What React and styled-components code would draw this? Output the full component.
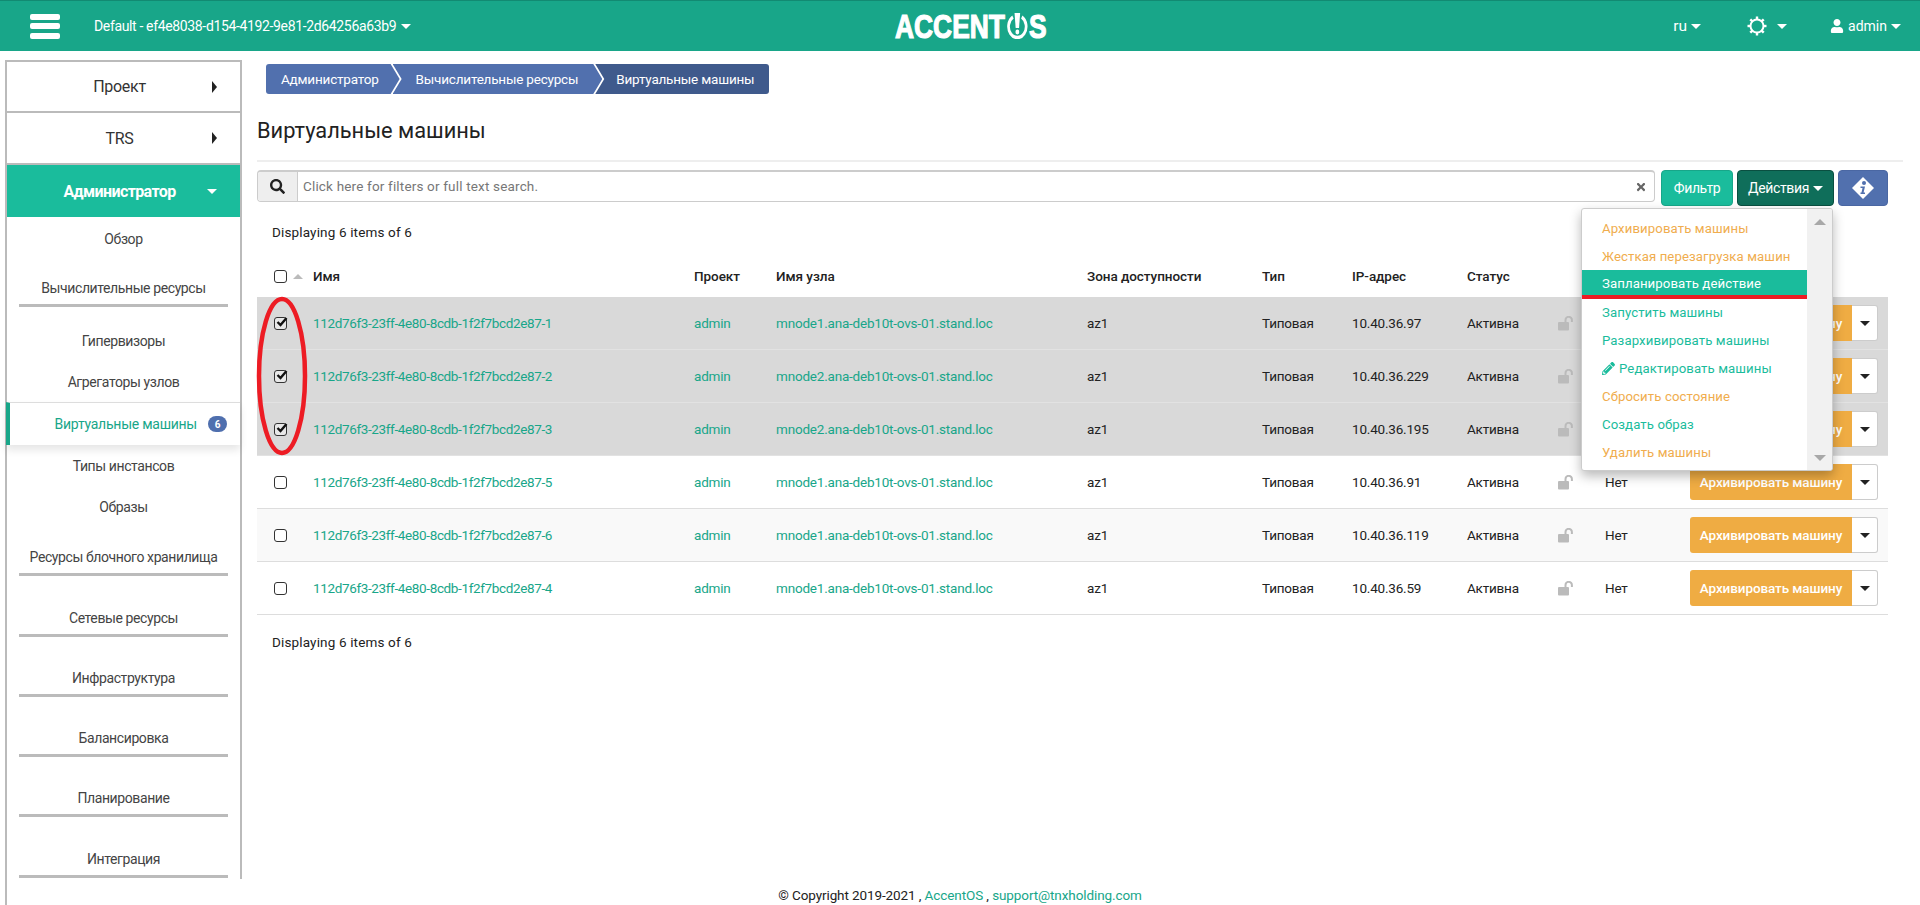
import React from "react";
import styled, { createGlobalStyle } from "styled-components";
import { FaSearch, FaTimes, FaPencilAlt, FaUser } from "react-icons/fa";

const FONT = `Roboto, "Liberation Sans", sans-serif`;

const Global = createGlobalStyle`
  html, body { margin: 0; padding: 0; height: 100%; background: #fff; }
  body { font-family: ${FONT}; font-size: 13px; color: #222; overflow: hidden; }
  * { box-sizing: border-box; }
`;

const Page = styled.div`
  width: 1920px;
  height: 905px;
  display: flex;
  flex-direction: column;
`;

const Header = styled.header`
  height: 51px;
  flex: none;
  background: #18a689;
  border-top: 1px solid #128a72;
  color: #fff;
  display: grid;
  grid-template-columns: 1fr auto 1fr;
  align-items: center;
`;

const HeaderLeft = styled.div`
  display: flex;
  align-items: center;
  padding-left: 30px;
`;

const Burger = styled.div`
  width: 30px;
  height: 25px;
  display: flex;
  flex-direction: column;
  justify-content: space-between;
  margin-right: 34px;
  span {
    height: 6px;
    border-radius: 2px;
    background: #fff;
  }
`;

const Project = styled.div`
  font-size: 14px;
  letter-spacing: -0.35px;
  display: flex;
  align-items: center;
  gap: 5px;
`;

const Caret = styled.i`
  display: inline-block;
  width: 0;
  height: 0;
  border-left: ${(p) => p.$size || 5}px solid transparent;
  border-right: ${(p) => p.$size || 5}px solid transparent;
  border-top: ${(p) => p.$size || 5}px solid ${(p) => p.$color || "currentColor"};
`;

const Logo = styled.div`
  display: flex;
  align-items: center;
  font-family: "Liberation Sans", sans-serif;
  font-weight: 700;
  font-size: 33px;
  line-height: 1;
  -webkit-text-stroke: 1.2px #fff;
  margin-left: 22px;
  transform: scaleX(0.8);
  svg { margin: 0 1px; }
`;

const HeaderRight = styled.div`
  display: flex;
  align-items: center;
  justify-content: flex-end;
  font-size: 14px;
`;

const TopMenu = styled.div`
  display: flex;
  align-items: center;
  gap: ${(p) => p.$gap || 4}px;
  margin-right: ${(p) => p.$mr || 0}px;
  font-size: ${(p) => p.$fs || 14}px;
`;

const Body = styled.div`
  flex: 1;
  display: flex;
  min-height: 0;
`;

const Sidebar = styled.aside`
  width: 237px;
  margin: 9px 0 0 5px;
  flex: none;
  border-left: 2px solid #bbb;
`;

const SideInner = styled.nav`
  height: 819px;
  border-top: 2px solid #bbb;
  border-right: 2px solid #bbb;
`;

const TopItem = styled.div`
  height: ${(p) => p.$h}px;
  display: grid;
  grid-template-columns: 1fr 48px;
  align-items: center;
  font-size: 16px;
  font-weight: ${(p) => (p.$active ? 700 : 400)};
  color: ${(p) => (p.$active ? "#fff" : "#333")};
  background: ${(p) => (p.$active ? "#1abc9c" : "#fff")};
  border-bottom: ${(p) => (p.$active ? "0" : "2px solid #bbb")};
  letter-spacing: ${(p) => (p.$active ? "-0.6px" : "-0.3px")};
  span { text-align: center; padding-left: 40px; }
`;

const ArrowRight = styled.i`
  width: 0;
  height: 0;
  margin-left: 20px;
  border-top: 6px solid transparent;
  border-bottom: 6px solid transparent;
  border-left: 5px solid #222;
`;

const Sub = styled.div`
  height: ${(p) => p.$h}px;
  display: flex;
  align-items: center;
  justify-content: center;
  font-size: 14px;
  color: #444;
  letter-spacing: -0.4px;
`;

const ActiveSub = styled.div`
  height: 43px;
  margin-left: -1px;
  display: flex;
  align-items: center;
  justify-content: flex-end;
  gap: 11px;
  padding-right: 13px;
  font-size: 14px;
  letter-spacing: -0.25px;
  color: #18a689;
  border-top: 1px solid #ddd;
  border-left: 4px solid #18a689;
  box-shadow: 0 5px 8px rgba(0, 0, 0, 0.1);
  position: relative;
`;

const Badge = styled.b`
  width: 19px;
  height: 16px;
  border-radius: 8px;
  background: #4f6fae;
  color: #fff;
  font-size: 10px;
  font-weight: 700;
  display: flex;
  align-items: center;
  justify-content: center;
`;

const Section = styled.div`
  height: ${(p) => p.$h}px;
  margin: 0 12px;
  display: flex;
  flex-direction: column;
  justify-content: flex-end;
  text-align: center;
  font-size: 14px;
  line-height: 20px;
  color: #444;
  letter-spacing: -0.4px;
  border-bottom: 3px solid #bbb;
  padding-bottom: 6px;
`;

const SubGroup = styled.div`
  padding-top: 14px;
`;

const Main = styled.main`
  flex: 1;
  display: flex;
  flex-direction: column;
  min-width: 0;
`;

const Content = styled.div`
  flex: 1;
  padding: 13px 17px 0 15px;
`;

const Crumbs = styled.div`
  display: flex;
  padding-left: 9px;
  height: 30px;
`;

const Crumb = styled.div`
  height: 30px;
  display: flex;
  align-items: center;
  color: #fff;
  font-size: 13.5px;
  letter-spacing: -0.2px;
  background: ${(p) => (p.$last ? "#3f5a8c" : "#5170ae")};
  padding: ${(p) => p.$pad};
  margin-left: ${(p) => p.$ml || 0}px;
  clip-path: ${(p) =>
    p.$first
      ? "polygon(0 0, calc(100% - 9px) 0, 100% 50%, calc(100% - 9px) 100%, 0 100%)"
      : p.$last
      ? "polygon(0 0, 100% 0, 100% 100%, 0 100%, 9px 50%)"
      : "polygon(0 0, calc(100% - 9px) 0, 100% 50%, calc(100% - 9px) 100%, 0 100%, 9px 50%)"};
  border-radius: ${(p) => (p.$first ? "3px 0 0 3px" : p.$last ? "0 3px 3px 0" : "0")};
`;

const Title = styled.h1`
  margin: 19px 0 11px 0;
  height: 36px;
  font-size: 21.8px;
  line-height: 36px;
  font-weight: 400;
  color: #222;
`;

const Rule = styled.div`
  height: 2px;
  background: #eee;
  margin-bottom: 8px;
`;

const Toolbar = styled.div`
  width: 1631px;
  display: flex;
  align-items: flex-start;
  position: relative;
`;

const Search = styled.div`
  width: 1398px;
  height: 32px;
  display: flex;
  align-items: center;
  border: 1px solid #ccc;
  border-top: 2px solid #ccc;
  border-radius: 4px;
  margin-right: 6px;
  overflow: hidden;
`;

const SearchAddon = styled.div`
  width: 40px;
  height: 100%;
  flex: none;
  background: #eee;
  border-right: 1px solid #ccc;
  display: flex;
  align-items: center;
  justify-content: center;
  color: #222;
  font-size: 15px;
`;

const SearchText = styled.div`
  flex: 1;
  padding: 0 0 2px 5px;
  font-size: 13.5px;
  letter-spacing: 0.17px;
  color: #777;
`;

const SearchClear = styled.div`
  color: #666;
  font-size: 12px;
  display: flex;
  margin-right: 7px;
`;

const ToolButton = styled.button`
  height: 36px;
  width: ${(p) => p.$w}px;
  margin-right: ${(p) => p.$mr || 0}px;
  border-radius: 4px;
  border: 1px solid ${(p) => p.$border};
  background: ${(p) => p.$bg};
  color: #fff;
  font-family: ${FONT};
  font-size: 14px;
  letter-spacing: -0.35px;
  padding: 0;
  display: flex;
  align-items: center;
  justify-content: center;
  gap: 4px;
`;

const Menu = styled.div`
  position: absolute;
  top: 38px;
  right: 55px;
  width: 252px;
  height: 263px;
  z-index: 3;
  background: #fff;
  border-radius: 3px;
  border: 1px solid #ccc;
  box-shadow: 0 5px 12px rgba(0, 0, 0, 0.28);
  display: flex;
  overflow: hidden;
`;

const MenuList = styled.div`
  flex: 1;
  padding-top: 5px;
`;

const MenuItem = styled.div`
  height: 28px;
  display: flex;
  align-items: center;
  gap: 4px;
  padding-left: 20px;
  font-size: 13.2px;
  letter-spacing: 0.1px;
  color: ${(p) => (p.$hot ? "#fff" : p.$warn ? "#f0ad4e" : "#1abc9c")};
  background: ${(p) => (p.$hot ? "#1abc9c" : "transparent")};
  ${(p) => p.$hot && "height: 29px; border-bottom: 4px solid #ed1c24; margin-bottom: -1px; padding-top: 2px;"}
`;

const MenuScroll = styled.div`
  width: 25px;
  flex: none;
  background: #f1f1f1;
  display: flex;
  flex-direction: column;
  justify-content: space-between;
  align-items: center;
  padding: 10px 0 9px;
`;

const ScrollArrow = styled.i`
  width: 0;
  height: 0;
  border-left: 6px solid transparent;
  border-right: 6px solid transparent;
  ${(p) => (p.$up ? "border-bottom: 6px solid #a8a8a8;" : "border-top: 6px solid #a8a8a8;")}
`;

const Count = styled.div`
  padding: ${(p) => p.$pad};
  font-size: 13.5px;
  line-height: 18px;
  letter-spacing: 0.15px;
  color: #222;
`;

const Table = styled.div`
  width: 1631px;
  position: relative;
  padding-top: 17px;
`;

const Row = styled.div`
  display: grid;
  grid-template-columns: 48px 381px 82px 311px 175px 90px 115px 91px 47px 85px 206px;
  align-items: center;
  height: ${(p) => (p.$head ? 39 : 53)}px;
  padding-bottom: ${(p) => (p.$head ? 3 : 0)}px;
  background: ${(p) => (p.$selected ? "#d9d9d9" : p.$alt ? "#f9f9f9" : "#fff")};
  border-bottom: ${(p) => (p.$head ? "0" : p.$selected ? "1px solid #e2e2e2" : "1px solid #ddd")};
`;

const Cell = styled.div`
  padding-left: 8px;
  font-size: 13.5px;
  letter-spacing: ${(p) => (p.$tight ? "-0.36px" : p.$head ? "-0.05px" : "-0.2px")};
  white-space: nowrap;
  color: ${(p) => (p.$link ? "#18a689" : "#222")};
  font-weight: ${(p) => (p.$head ? 500 : 400)};
`;

const CheckCell = styled.div`
  display: flex;
  align-items: center;
  gap: 6px;
  padding-left: 17px;
`;

const Box = styled.span`
  width: 13px;
  height: 13px;
  flex: none;
  border: 1.5px solid #333;
  border-radius: 3px;
  background: ${(p) => (p.$on ? "#e8e8e8" : "#fff")};
  position: relative;
  svg {
    position: absolute;
    left: 0;
    top: -3px;
  }
`;

const SortUp = styled.i`
  width: 0;
  height: 0;
  border-left: 5px solid transparent;
  border-right: 5px solid transparent;
  border-bottom: 5px solid #bbb;
`;

const Lock = styled.div`
  padding-left: 8px;
  display: flex;
`;

const SplitButton = styled.div`
  padding-left: 8px;
  display: flex;
  height: 36px;
`;

const ArchiveBtn = styled.div`
  width: 162px;
  background: #efac43;
  color: #fff;
  font-size: 13.5px;
  font-weight: 500;
  letter-spacing: -0.1px;
  border-radius: 3px 0 0 3px;
  display: flex;
  align-items: center;
  justify-content: center;
`;

const CaretBtn = styled.div`
  width: 26px;
  background: #fff;
  border: 1px solid #ccc;
  border-left: 0;
  border-radius: 0 3px 3px 0;
  display: flex;
  align-items: center;
  justify-content: center;
`;

const Ellipse = styled.svg`
  position: absolute;
  left: -1px;
  top: 54px;
  z-index: 2;
`;

const Footer = styled.footer`
  height: 19px;
  line-height: 18px;
  padding-right: 242px;
  text-align: center;
  font-size: 13.5px;
  letter-spacing: -0.1px;
  color: #222;
  a { color: #18a689; text-decoration: none; }
`;

const rows = [
  { id: 1, node: "mnode1", ip: "10.40.36.97", selected: true },
  { id: 2, node: "mnode2", ip: "10.40.36.229", selected: true },
  { id: 3, node: "mnode2", ip: "10.40.36.195", selected: true },
  { id: 5, node: "mnode1", ip: "10.40.36.91" },
  { id: 6, node: "mnode1", ip: "10.40.36.119", alt: true },
  { id: 4, node: "mnode1", ip: "10.40.36.59" },
];

const actions = [
  { label: "Архивировать машины", warn: true },
  { label: "Жесткая перезагрузка машин", warn: true },
  { label: "Запланировать действие", hot: true },
  { label: "Запустить машины" },
  { label: "Разархивировать машины" },
  { label: "Редактировать машины", pencil: true },
  { label: "Сбросить состояние", warn: true },
  { label: "Создать образ" },
  { label: "Удалить машины", warn: true },
];

function Gear() {
  const ticks = [0, 45, 90, 135, 180, 225, 270, 315];
  return (
    <svg width="20" height="20" viewBox="0 0 20 20">
      <circle cx="10" cy="10" r="6.5" fill="none" stroke="#fff" strokeWidth="2" />
      {ticks.map((a) => (
        <rect key={a} x="8.8" y="0.5" width="2.4" height="3" fill="#fff" transform={`rotate(${a} 10 10)`} />
      ))}
    </svg>
  );
}

function PowerO() {
  return (
    <svg width="28" height="26" viewBox="0 0 28 26">
      <path d="M8.5 4A11 11 0 1 0 19.5 4" fill="none" stroke="#fff" strokeWidth="3.4" />
      <path d="M10.5 0h7l-1.4 15h-4.2z" fill="#fff" />
      <circle cx="14" cy="19" r="2.4" fill="#fff" />
    </svg>
  );
}

function InfoDiamond() {
  return (
    <svg width="24" height="24" viewBox="0 0 24 24">
      <path d="M12 1l11 11-11 11L1 12z" fill="#fff" />
      <circle cx="13" cy="7" r="2" fill="#5170ae" />
      <path d="M9.5 10.5h4.5l-1.4 6h1.4v1.5H9.5v-1.5h1l1-4.5h-2z" fill="#5170ae" />
    </svg>
  );
}

function OpenLock() {
  return (
    <svg width="16" height="15" viewBox="0 0 16 15">
      <rect x="0" y="6" width="11" height="8.5" rx="1" fill="#bbb" />
      <path d="M7.5 6V4a3.2 3.2 0 0 1 6.4 0v2" fill="none" stroke="#bbb" strokeWidth="2" />
    </svg>
  );
}

function Checkbox({ on }) {
  return (
    <Box $on={on}>
      {on && (
        <svg width="14" height="14" viewBox="0 0 14 14">
          <path d="M2.5 7l3 3 6-7" fill="none" stroke="#111" strokeWidth="2.4" />
        </svg>
      )}
    </Box>
  );
}

export default function App() {
  return (
    <Page>
      <Global />
      <Header>
        <HeaderLeft>
          <Burger>
            <span />
            <span />
            <span />
          </Burger>
          <Project>
            Default - ef4e8038-d154-4192-9e81-2d64256a63b9 <Caret />
          </Project>
        </HeaderLeft>
        <Logo>
          ACCENT
          <PowerO />S
        </Logo>
        <HeaderRight>
          <TopMenu $mr={46} $fs={15.5}>
            ru <Caret />
          </TopMenu>
          <TopMenu $gap={10} $mr={43}>
            <Gear /> <Caret />
          </TopMenu>
          <TopMenu $gap={4} $mr={19}>
            <FaUser size={14} /> admin <Caret />
          </TopMenu>
        </HeaderRight>
      </Header>
      <Body>
        <Sidebar>
          <SideInner>
            <TopItem $h={51}>
              <span>Проект</span>
              <ArrowRight />
            </TopItem>
            <TopItem $h={52}>
              <span>TRS</span>
              <ArrowRight />
            </TopItem>
            <TopItem $active $h={52}>
              <span>Администратор</span>
              <Caret $size={5} style={{ marginLeft: 15 }} />
            </TopItem>
            <Sub $h={44}>Обзор</Sub>
            <Section $h={46}>Вычислительные ресурсы</Section>
            <SubGroup>
              <Sub $h={40}>Гипервизоры</Sub>
              <Sub $h={41}>Агрегаторы узлов</Sub>
              <ActiveSub>
                Виртуальные машины <Badge>6</Badge>
              </ActiveSub>
              <Sub $h={42}>Типы инстансов</Sub>
              <Sub $h={40}>Образы</Sub>
            </SubGroup>
            <Section $h={49}>Ресурсы блочного хранилища</Section>
            <Section $h={61}>Сетевые ресурсы</Section>
            <Section $h={60}>Инфраструктура</Section>
            <Section $h={60}>Балансировка</Section>
            <Section $h={60}>Планирование</Section>
            <Section $h={61}>Интеграция</Section>
          </SideInner>
        </Sidebar>
        <Main>
          <Content>
            <Crumbs>
              <Crumb $first $pad="0 21px 0 15px">Администратор</Crumb>
              <Crumb $ml={-7} $pad="0 24px 0 23px">Вычислительные ресурсы</Crumb>
              <Crumb $last $ml={-7} $pad="0 15px 0 21px">Виртуальные машины</Crumb>
            </Crumbs>
            <Title>Виртуальные машины</Title>
            <Rule />
            <Toolbar>
              <Search>
                <SearchAddon>
                  <FaSearch />
                </SearchAddon>
                <SearchText>Click here for filters or full text search.</SearchText>
                <SearchClear>
                  <FaTimes />
                </SearchClear>
              </Search>
              <ToolButton $w={72} $mr={4} $bg="#1abc9c" $border="#18a689">
                Фильтр
              </ToolButton>
              <ToolButton $w={97} $mr={4} $bg="#0f6e5a" $border="#0a4f41">
                Действия <Caret />
              </ToolButton>
              <ToolButton $w={50} $bg="#5170ae" $border="#4a67a3">
                <InfoDiamond />
              </ToolButton>
              <Menu>
                <MenuList>
                  {actions.map((a) => (
                    <MenuItem key={a.label} $warn={a.warn} $hot={a.hot}>
                      {a.pencil && <FaPencilAlt size={13} />}
                      {a.label}
                    </MenuItem>
                  ))}
                </MenuList>
                <MenuScroll>
                  <ScrollArrow $up />
                  <ScrollArrow />
                </MenuScroll>
              </Menu>
            </Toolbar>
            <Count $pad="17px 0 0 15px">Displaying 6 items of 6</Count>
            <Table>
              <Row $head>
                <CheckCell>
                  <Checkbox />
                  <SortUp />
                </CheckCell>
                {["Имя", "Проект", "Имя узла", "Зона доступности", "Тип", "IP-адрес", "Статус"].map((h) => (
                  <Cell $head key={h}>
                    {h}
                  </Cell>
                ))}
              </Row>
              <Ellipse width="54" height="162" viewBox="0 0 54 162">
                <ellipse cx="26" cy="81" rx="23" ry="77" fill="none" stroke="#ed1c24" strokeWidth="4.5" />
              </Ellipse>
              {rows.map((r) => (
                <Row key={r.id} $selected={r.selected} $alt={r.alt}>
                  <CheckCell>
                    <Checkbox on={r.selected} />
                  </CheckCell>
                  <Cell $link $tight>112d76f3-23ff-4e80-8cdb-1f2f7bcd2e87-{r.id}</Cell>
                  <Cell $link>admin</Cell>
                  <Cell $link>{r.node}.ana-deb10t-ovs-01.stand.loc</Cell>
                  <Cell>az1</Cell>
                  <Cell>Типовая</Cell>
                  <Cell>{r.ip}</Cell>
                  <Cell>Активна</Cell>
                  <Lock>
                    <OpenLock />
                  </Lock>
                  <Cell>Нет</Cell>
                  <SplitButton>
                    <ArchiveBtn>Архивировать машину</ArchiveBtn>
                    <CaretBtn>
                      <Caret $color="#222" />
                    </CaretBtn>
                  </SplitButton>
                </Row>
              ))}
            </Table>
            <Count $pad="18px 0 0 15px">Displaying 6 items of 6</Count>
          </Content>
          <Footer>
            © Copyright 2019-2021 , <a>AccentOS</a> , <a>support@tnxholding.com</a>
          </Footer>
        </Main>
      </Body>
    </Page>
  );
}
